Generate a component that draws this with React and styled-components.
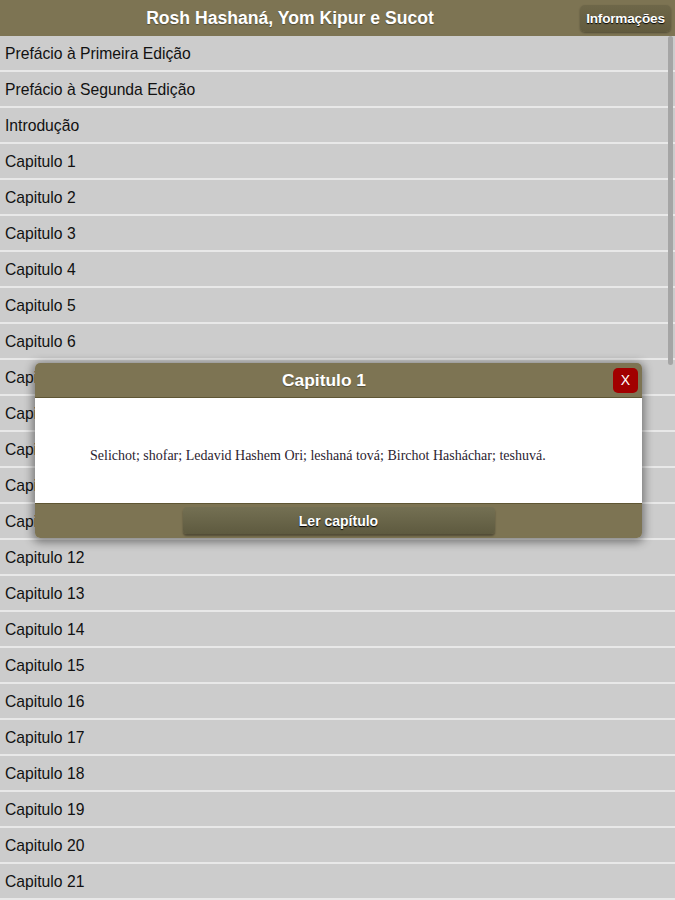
import React from "react";
import styled, { createGlobalStyle } from "styled-components";

const Global = createGlobalStyle`
  html, body { margin: 0; padding: 0; height: 100%; overflow: hidden; }
  body { background: #cccccc; font-family: "Liberation Sans", Arial, sans-serif; }
  #root { height: 100%; }
`;

const Page = styled.div`
  display: flex;
  flex-direction: column;
  height: 100vh;
`;

const TopBar = styled.header`
  flex: 0 0 36px;
  display: flex;
  align-items: center;
  background: #7d7453;
  padding-right: 4px;
  box-sizing: border-box;
`;

const Title = styled.h1`
  flex: 1;
  margin: 0;
  text-align: center;
  color: #fff;
  font-size: 17.6px;
  font-weight: bold;
  text-shadow: 0 1px 1px rgba(0, 0, 0, 0.35);
`;

const InfoButton = styled.button`
  width: 91px;
  height: 27px;
  padding: 0;
  border: none;
  border-radius: 5px;
  background: linear-gradient(#6e6749, #625b3e);
  box-shadow: 0 1px 2px rgba(0, 0, 0, 0.35);
  color: #fff;
  font-family: "Liberation Sans", Arial, sans-serif;
  font-size: 13.6px;
  font-weight: bold;
  letter-spacing: -0.2px;
  text-shadow: 0 1px 1px #000;
`;

const ListWrap = styled.div`
  flex: 1;
  position: relative;
  overflow: hidden;
`;

const List = styled.ul`
  margin: 0;
  padding: 0;
  list-style: none;
`;

const ScrollThumb = styled.div`
  position: absolute;
  top: 0;
  right: 2px;
  width: 5px;
  height: 329px;
  border-radius: 3px;
  background: #a5a5a5;
`;

const Row = styled.li`
  height: 32px;
  padding: 2px 0 0 5px;
  display: flex;
  align-items: center;
  border-bottom: 2px solid #e8e8e8;
  font-size: 15.7px;
  color: #111;
`;

const Modal = styled.section`
  position: fixed;
  top: 363px;
  left: 35px;
  width: 607px;
  border-radius: 5px;
  overflow: hidden;
  box-shadow: 0 2px 10px 2px rgba(0, 0, 0, 0.45);
  display: flex;
  flex-direction: column;
`;

const ModalHead = styled.div`
  height: 34px;
  background: #7d7453;
  border-bottom: 1px solid #5f5634;
  display: flex;
  align-items: center;
  padding-right: 4px;
`;

const ModalTitle = styled.h2`
  flex: 1;
  margin: 0;
  text-align: center;
  color: #fff;
  font-size: 17.4px;
  font-weight: bold;
  text-shadow: 0 1px 1px rgba(0, 0, 0, 0.35);
`;

const CloseBtn = styled.button`
  width: 25px;
  height: 25px;
  border: none;
  border-radius: 5px;
  background: #a20000;
  color: #fff;
  font-family: "Liberation Sans", Arial, sans-serif;
  font-size: 14px;
  padding: 0;
`;

const ModalBody = styled.div`
  height: 105px;
  background: #fff;
  box-sizing: border-box;
  padding: 50px 20px 0 55px;
  font-family: "Liberation Serif", "Times New Roman", serif;
  font-size: 14px;
  line-height: 16px;
  color: #2b2330;
`;

const ModalFoot = styled.div`
  height: 35px;
  background: #7d7453;
  border-top: 1px solid #5f5634;
  box-sizing: border-box;
  display: flex;
  justify-content: center;
  padding-top: 3px;
`;

const ReadBtn = styled.button`
  width: 312px;
  height: 27px;
  border: none;
  border-radius: 4px;
  background: linear-gradient(#747053, #5e5a3f);
  box-shadow: 0 2px 2px rgba(0, 0, 0, 0.35);
  color: #fff;
  font-family: "Liberation Sans", Arial, sans-serif;
  font-size: 14px;
  font-weight: bold;
  text-shadow: 0 1px 1px #000;
`;

const items = [
  "Prefácio à Primeira Edição",
  "Prefácio à Segunda Edição",
  "Introdução",
  ...Array.from({ length: 21 }, (_, i) => `Capitulo ${i + 1}`),
];

export default function App() {
  return (
    <Page>
      <Global />
      <TopBar>
        <Title>Rosh Hashaná, Yom Kipur e Sucot</Title>
        <InfoButton>Informações</InfoButton>
      </TopBar>
      <ListWrap>
        <List>
          {items.map((t) => (
            <Row key={t}>{t}</Row>
          ))}
        </List>
        <ScrollThumb />
      </ListWrap>
      <Modal>
        <ModalHead>
          <ModalTitle>Capitulo 1</ModalTitle>
          <CloseBtn>X</CloseBtn>
        </ModalHead>
        <ModalBody>
          Selichot; shofar; Ledavid Hashem Ori; leshaná tová; Birchot Hasháchar; teshuvá.
        </ModalBody>
        <ModalFoot>
          <ReadBtn>Ler capítulo</ReadBtn>
        </ModalFoot>
      </Modal>
    </Page>
  );
}
